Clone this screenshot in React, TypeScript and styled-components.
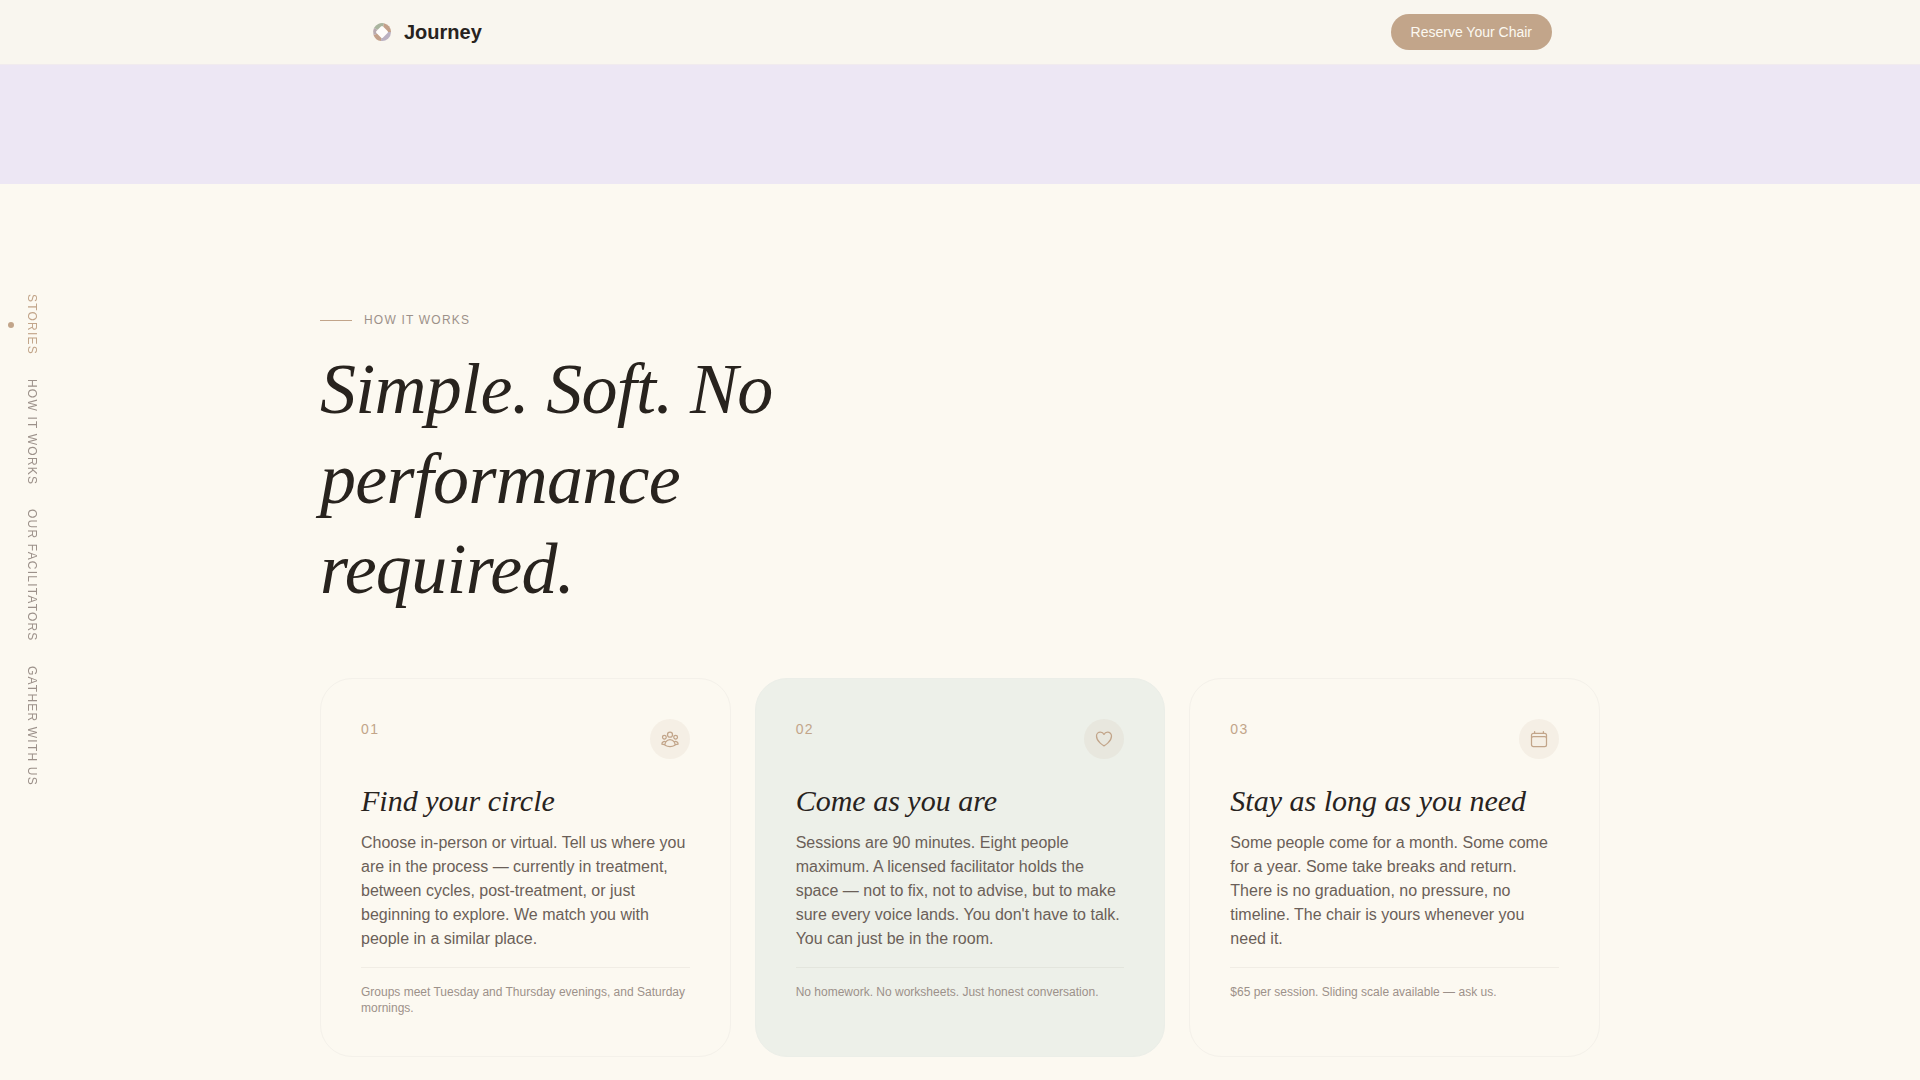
import React from "react";
import styled, { createGlobalStyle } from "styled-components";
import { HiOutlineCalendar, HiOutlineHeart, HiOutlineUserGroup } from "react-icons/hi2";

const color = {
  cream: "#fcf9f1",
  bar: "#f9f6ef",
  lavender: "#ede7f4",
  sage: "#edf0e9",
  ink: "#28231e",
  body: "#6b5f58",
  muted: "#9c918a",
  clay: "#c2a58a",
  hairline: "#f4f1ea",
};

const sans = `"Liberation Sans", Arial, sans-serif`;
const serif = `"Liberation Serif", "Times New Roman", serif`;

const GlobalStyle = createGlobalStyle`
  *, *::before, *::after { box-sizing: border-box; }
  body {
    margin: 0;
    background: ${color.cream};
    color: ${color.ink};
    font-family: ${sans};
    font-size: 16px;
    line-height: 24px;
  }
  h1, h2, h3, p, ul, ol { margin: 0; padding: 0; }
  ul, ol { list-style: none; }
`;

const Header = styled.header`
  position: fixed;
  inset: 0 0 auto 0;
  z-index: 10;
  background: ${color.bar};
  border-bottom: 1px solid #f1ebee;
`;

const HeaderInner = styled.div`
  display: flex;
  align-items: center;
  justify-content: space-between;
  max-width: 1280px;
  margin: 0 auto;
  padding: 14px 48px;
`;

const Brand = styled.a`
  display: flex;
  align-items: center;
  gap: 8px;
  color: ${color.ink};
  font-size: 20px;
  font-weight: 700;
  line-height: 28px;
  text-decoration: none;
`;

const ReserveButton = styled.button`
  padding: 8px 20px;
  border: 0;
  border-radius: 18px;
  background: ${color.clay};
  color: ${color.cream};
  font-family: ${sans};
  font-size: 14px;
  line-height: 20px;
  cursor: pointer;
`;

const SideNav = styled.nav`
  position: fixed;
  top: 0;
  bottom: 0;
  left: 24px;
  z-index: 5;
  display: flex;
  align-items: center;
`;

const SideList = styled.ul`
  display: flex;
  flex-direction: column;
  gap: 24px;
`;

const SideItem = styled.li`
  display: flex;
`;

const SideLink = styled.a<{ $active?: boolean }>`
  position: relative;
  writing-mode: vertical-rl;
  color: ${(p) => (p.$active ? color.clay : color.muted)};
  font-size: 12px;
  line-height: 16px;
  letter-spacing: 0.1em;
  text-transform: uppercase;
  text-decoration: none;

  &::before {
    content: "";
    display: ${(p) => (p.$active ? "block" : "none")};
    position: absolute;
    top: calc(50% - 3px);
    left: -16px;
    width: 6px;
    height: 6px;
    border-radius: 50%;
    background: ${color.clay};
  }
`;

const StoriesBand = styled.section`
  height: 184px;
  background: ${color.lavender};
`;

const Section = styled.section`
  max-width: 1280px;
  margin: 0 auto;
  padding: 128px 0 16px;
`;

const Eyebrow = styled.p`
  display: flex;
  align-items: center;
  gap: 12px;
  margin-bottom: 16px;
  color: ${color.muted};
  font-size: 12px;
  line-height: 16px;
  letter-spacing: 0.1em;
  text-transform: uppercase;

  &::before {
    content: "";
    width: 32px;
    height: 1px;
    background: ${color.clay};
  }
`;

const Heading = styled.h2`
  max-width: 576px;
  margin-bottom: 64px;
  font-family: ${serif};
  font-size: 72px;
  font-style: italic;
  font-weight: 400;
  line-height: 90px;
  letter-spacing: -0.01em;
`;

const Steps = styled.ol`
  display: grid;
  grid-template-columns: repeat(3, minmax(0, 1fr));
  gap: 24px;
`;

const Card = styled.li<{ $tinted?: boolean }>`
  padding: 40px;
  border: 1px solid ${(p) => (p.$tinted ? "#ebeee8" : color.hairline)};
  border-radius: 32px;
  background: ${(p) => (p.$tinted ? color.sage : "transparent")};
`;

const CardTop = styled.div`
  display: flex;
  align-items: flex-start;
  justify-content: space-between;
  margin-bottom: 24px;
`;

const StepNumber = styled.span`
  color: ${color.clay};
  font-size: 14px;
  line-height: 20px;
  letter-spacing: 0.1em;
`;

const IconDisc = styled.span`
  display: flex;
  align-items: center;
  justify-content: center;
  width: 40px;
  height: 40px;
  border-radius: 50%;
  background: rgba(190, 160, 140, 0.11);
  color: ${color.clay};
  font-size: 20px;
`;

const CardTitle = styled.h3`
  margin-bottom: 12px;
  font-family: ${serif};
  font-size: 30px;
  font-style: italic;
  font-weight: 400;
  line-height: 36px;
`;

const CardText = styled.p`
  color: ${color.body};
`;

const CardNote = styled.p`
  margin-top: 16px;
  padding-top: 16px;
  border-top: 1px solid rgba(110, 100, 90, 0.08);
  color: ${color.muted};
  font-size: 12px;
  line-height: 16px;
`;

const navItems = ["Stories", "How it works", "Our facilitators", "Gather with us"];

const steps = [
  {
    number: "01",
    icon: <HiOutlineUserGroup />,
    title: "Find your circle",
    text: "Choose in-person or virtual. Tell us where you are in the process — currently in treatment, between cycles, post-treatment, or just beginning to explore. We match you with people in a similar place.",
    note: "Groups meet Tuesday and Thursday evenings, and Saturday mornings.",
  },
  {
    number: "02",
    icon: <HiOutlineHeart />,
    title: "Come as you are",
    text: "Sessions are 90 minutes. Eight people maximum. A licensed facilitator holds the space — not to fix, not to advise, but to make sure every voice lands. You don't have to talk. You can just be in the room.",
    note: "No homework. No worksheets. Just honest conversation.",
    tinted: true,
  },
  {
    number: "03",
    icon: <HiOutlineCalendar />,
    title: "Stay as long as you need",
    text: "Some people come for a month. Some come for a year. Some take breaks and return. There is no graduation, no pressure, no timeline. The chair is yours whenever you need it.",
    note: "$65 per session. Sliding scale available — ask us.",
  },
];

function Logo() {
  return (
    <svg width="28" height="28" viewBox="0 0 28 28" aria-hidden="true">
      <path d="M14 14L6 10A9 9 0 0 1 16 5.2Z" fill="#aab59f" />
      <path d="M14 14L16 5.2A9 9 0 0 1 23 14Z" fill="#c3a08a" />
      <path d="M14 14L23 14A9 9 0 0 1 13 23Z" fill="#bbb1c2" />
      <path d="M14 14L13 23A9 9 0 0 1 5.5 17Z" fill="#c3a08a" />
      <path d="M14 14L5.5 17A9 9 0 0 1 6 10Z" fill="#b9aab0" />
      <path
        d="M14 9.5L18.5 14L14 18.5L9.5 14Z"
        fill="#fffdfb"
        stroke="#fffdfb"
        strokeWidth="3"
        strokeLinejoin="round"
      />
    </svg>
  );
}

export default function App() {
  return (
    <>
      <GlobalStyle />
      <Header>
        <HeaderInner>
          <Brand href="#top">
            <Logo />
            Journey
          </Brand>
          <ReserveButton type="button">Reserve Your Chair</ReserveButton>
        </HeaderInner>
      </Header>
      <SideNav aria-label="Sections">
        <SideList>
          {navItems.map((label, i) => (
            <SideItem key={label}>
              <SideLink href={`#${label.toLowerCase().replace(/ /g, "-")}`} $active={i === 0}>
                {label}
              </SideLink>
            </SideItem>
          ))}
        </SideList>
      </SideNav>
      <main>
        <StoriesBand id="stories" aria-label="Stories" />
        <Section id="how-it-works">
          <Eyebrow>How it works</Eyebrow>
          <Heading>Simple. Soft. No performance required.</Heading>
          <Steps>
            {steps.map((step) => (
              <Card key={step.number} $tinted={step.tinted}>
                <CardTop>
                  <StepNumber>{step.number}</StepNumber>
                  <IconDisc aria-hidden="true">{step.icon}</IconDisc>
                </CardTop>
                <CardTitle>{step.title}</CardTitle>
                <CardText>{step.text}</CardText>
                <CardNote>{step.note}</CardNote>
              </Card>
            ))}
          </Steps>
        </Section>
      </main>
    </>
  );
}
